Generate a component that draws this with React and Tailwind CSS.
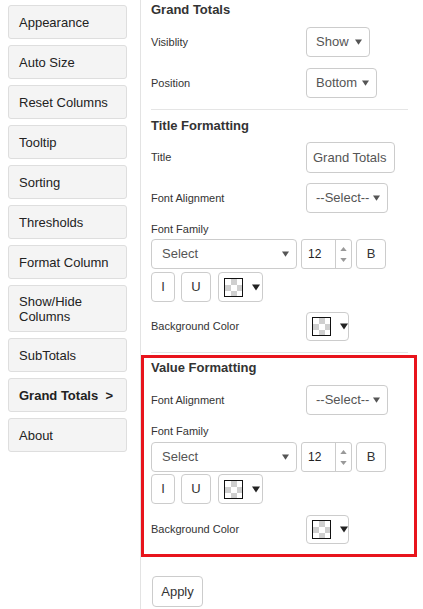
const MENU = [
  { label: "Appearance" },
  { label: "Auto Size" },
  { label: "Reset Columns" },
  { label: "Tooltip" },
  { label: "Sorting" },
  { label: "Thresholds" },
  { label: "Format Column" },
  { label: "Show/Hide Columns", tall: true },
  { label: "SubTotals" },
  { label: "Grand Totals", active: true },
  { label: "About" },
];

function Caret({ cls = "fill-[#555]", w = 7, h = 6 }) {
  return (
    <svg width={w} height={h} viewBox="0 0 8 6" className={cls}>
      <path d="M0 0 H8 L4 6 Z" />
    </svg>
  );
}

function Swatch() {
  return (
    <svg width="19" height="19" viewBox="0 0 19 19">
      <rect x="0.5" y="0.5" width="18" height="18" fill="#fff" stroke="#111" />
      <rect x="7" y="1" width="6" height="6" fill="#cfcfcf" />
      <rect x="1" y="7" width="6" height="6" fill="#cfcfcf" />
      <rect x="13" y="7" width="5" height="6" fill="#cfcfcf" />
      <rect x="7" y="13" width="6" height="5" fill="#cfcfcf" />
    </svg>
  );
}

function SelectBox({ value, w, h = "h-[30px]" }) {
  return (
    <div className={`${w} ${h} flex items-center justify-between pl-[9px] pr-[7px] border border-[#ccc] rounded-[4px] bg-white text-[13px] text-[#555]`}>
      <span>{value}</span>
      <Caret />
    </div>
  );
}

function ColorButton({ w = "w-[45px]", h = "h-[30px]" }) {
  return (
    <div className={`${w} ${h} flex items-center gap-[9px] pl-[5px] border border-[#ccc] rounded-[4px] bg-white`}>
      <Swatch />
      <Caret cls="fill-[#222]" w={8} h={7} />
    </div>
  );
}

function Row({ label, children, className = "" }) {
  return (
    <div className={`flex items-center ${className}`}>
      <div className="w-[155px] text-[11px] text-[#333]">{label}</div>
      {children}
    </div>
  );
}

function FontControls() {
  return (
    <>
      <div className="flex items-center gap-[4px] h-[30px]">
        <div className="w-[146px] h-[30px] flex items-center justify-between pl-[10px] pr-[7px] border border-[#ccc] rounded-[4px] text-[13px] text-[#555]">
          <span>Select</span>
          <Caret />
        </div>
        <div className="w-[51px] h-[30px] flex border border-[#ccc] rounded-[3px] text-[12px] text-[#222]">
          <div className="flex-1 flex items-center pl-[6px]">12</div>
          <div className="w-[16px] border-l border-[#ccc] flex flex-col items-center justify-center gap-[7px]">
            <svg width="7" height="4" viewBox="0 0 8 5" className="fill-[#999]"><path d="M0 5 H8 L4 0 Z" /></svg>
            <svg width="7" height="4" viewBox="0 0 8 5" className="fill-[#999]"><path d="M0 0 H8 L4 5 Z" /></svg>
          </div>
        </div>
        <div className="w-[30px] h-[30px] flex items-center justify-center border border-[#ccc] rounded-[4px] text-[13px] text-[#333]">B</div>
      </div>
      <div className="flex items-center h-[30px]">
        <div className="w-[24px] h-[30px] flex items-center justify-center border border-[#ccc] rounded-[4px] text-[13px] text-[#333]">I</div>
        <div className="ml-[6px] w-[30px] h-[30px] flex items-center justify-center border border-[#ccc] rounded-[4px] text-[13px] text-[#333]">U</div>
        <div className="ml-[7px]">
          <ColorButton />
        </div>
      </div>
    </>
  );
}

export default function App() {
  return (
    <div className="flex w-[423px] h-[609px] bg-white overflow-hidden font-['Liberation_Sans',Arial,sans-serif]">
      {/* Sidebar */}
      <div className="w-[141px] shrink-0 border-r border-[#e3e3e3] pl-[8px] pt-[5px] flex flex-col gap-[6px]">
        {MENU.map((m) => (
          <div
            key={m.label}
            className={`w-[119px] ${m.tall ? "h-[47px]" : "h-[34px]"} flex items-center justify-between pl-[10px] pr-[13px] bg-[#f4f4f4] border border-[#dedede] rounded-[3px] text-[13px] leading-[15px] text-[#222] ${m.active ? "font-bold" : ""}`}
          >
            <span className={m.tall ? "w-[80px]" : ""}>{m.label}</span>
            {m.active && <span>&gt;</span>}
          </div>
        ))}
      </div>

      {/* Content */}
      <div className="w-[267px] pl-[10px] pt-[2px] flex flex-col">
        <div className="text-[13px] leading-[16px] font-bold text-[#333]">Grand Totals</div>
        <Row label="Visiblity" className="mt-[9px]">
          <SelectBox value="Show" w="w-[64px]" />
        </Row>
        <Row label="Position" className="mt-[11px]">
          <SelectBox value="Bottom" w="w-[71px]" />
        </Row>
        <div className="mt-[11px] h-px bg-[#e5e5e5]" />

        <div className="mt-[8px] text-[13px] leading-[16px] font-bold text-[#333]">Title Formatting</div>
        <Row label="Title" className="mt-[8px]">
          <div className="w-[89px] h-[31px] flex items-center pl-[6px] border border-[#ccc] rounded-[4px] text-[13px] text-[#555]">Grand Totals</div>
        </Row>
        <Row label="Font Alignment" className="mt-[10px]">
          <SelectBox value="--Select--" w="w-[82px]" />
        </Row>
        <div className="mt-[9px] text-[11px] leading-[14px] text-[#333]">Font Family</div>
        <div className="mt-[3px] flex flex-col gap-[3px]">
          <FontControls />
        </div>
        <Row label="Background Color" className="mt-[10px]">
          <ColorButton w="w-[43px]" h="h-[29px]" />
        </Row>
        <div className="mt-[11px] h-px bg-[#e5e5e5]" />

        {/* Highlighted section */}
        <div className="mt-[2px] -ml-[10px] w-[276px] border-[3px] border-[#e8141c] pl-[7px] pt-[2px] pb-[10px] flex flex-col">
          <div className="text-[13px] leading-[16px] font-bold text-[#333]">Value Formatting</div>
          <Row label="Font Alignment" className="mt-[9px]">
            <SelectBox value="--Select--" w="w-[82px]" />
          </Row>
          <div className="mt-[9px] text-[11px] leading-[14px] text-[#333]">Font Family</div>
          <div className="mt-[4px] flex flex-col gap-[2px]">
            <FontControls />
          </div>
          <Row label="Background Color" className="mt-[11px]">
            <ColorButton w="w-[43px]" h="h-[29px]" />
          </Row>
        </div>

        <div className="mt-[19px] ml-[1px] w-[51px] h-[31px] flex items-center justify-center border border-[#ccc] rounded-[4px] text-[13px] text-[#333]">
          Apply
        </div>
      </div>
    </div>
  );
}
